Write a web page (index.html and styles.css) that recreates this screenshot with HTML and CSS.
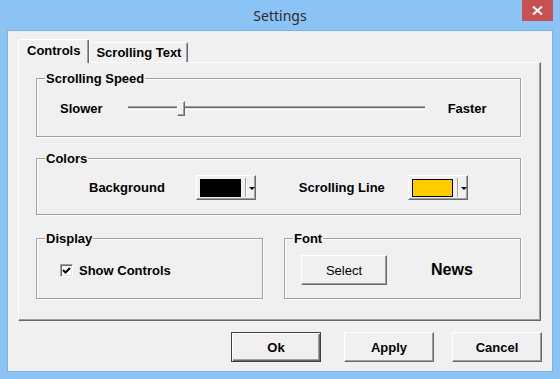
FILE: index.html
```html
<!DOCTYPE html>
<html>
<head>
<meta charset="utf-8">
<title>Settings</title>
<link rel="stylesheet" href="styles.css">
</head>
<body>
<div class="window">
  <header class="titlebar">
    <span class="tb-side"></span>
    <span class="title">Settings</span>
    <span class="tb-side tb-right">
      <span class="close">
        <svg width="11" height="9" viewBox="0 0 11 9"><path d="M1 0.5 L10 8.5 M10 0.5 L1 8.5" stroke="#fff" stroke-width="2"/></svg>
      </span>
    </span>
  </header>
  <main class="client">
    <div class="tabstrip">
      <div class="tab active">Controls</div>
      <div class="tab">Scrolling Text</div>
    </div>
    <div class="panel">
      <section class="group g-speed">
        <div class="legend">Scrolling Speed</div>
        <div class="row speed-row">
          <span class="lbl">Slower</span>
          <div class="slider">
            <div class="track"></div>
            <div class="thumb"></div>
          </div>
          <span class="lbl faster">Faster</span>
        </div>
      </section>
      <section class="group g-colors">
        <div class="legend">Colors</div>
        <div class="row colors-row">
          <span class="lbl bg-lbl">Background</span>
          <div class="colorbtn"><span class="swatch sw-black"></span><span class="sep"></span><span class="arrow"></span></div>
          <span class="lbl line-lbl">Scrolling Line</span>
          <div class="colorbtn"><span class="swatch sw-yellow"></span><span class="sep"></span><span class="arrow"></span></div>
        </div>
      </section>
      <div class="bottom-groups">
        <section class="group g-display">
          <div class="legend">Display</div>
          <div class="row display-row">
            <span class="checkbox">
              <svg width="9" height="9" viewBox="0 0 9 9"><path d="M1 4 L3.5 6.5 L8 2" stroke="#000" stroke-width="2" fill="none"/></svg>
            </span>
            <span class="lbl">Show Controls</span>
          </div>
        </section>
        <section class="group g-font">
          <div class="legend">Font</div>
          <div class="row font-row">
            <div class="btn select-btn">Select</div>
            <span class="news">News</span>
          </div>
        </section>
      </div>
    </div>
    <div class="buttons">
      <div class="btn dlg default">Ok</div>
      <div class="btn dlg apply">Apply</div>
      <div class="btn dlg">Cancel</div>
    </div>
  </main>
</div>
</body>
</html>
```

FILE: styles.css
```css
* { box-sizing: border-box; }
html, body { margin: 0; padding: 0; }
body {
  width: 560px;
  height: 379px;
  overflow: hidden;
  font-family: "Liberation Sans", Arial, sans-serif;
  font-size: 13px;
  color: #000;
}
.window {
  width: 560px;
  height: 379px;
  background: #8cc3f5;
  display: flex;
  flex-direction: column;
}
.titlebar {
  height: 30px;
  display: grid;
  grid-template-columns: 1fr auto 1fr;
  align-items: start;
}
.title {
  font-family: "Noto Sans", "Open Sans", sans-serif;
  font-size: 14px;
  color: #2b2b2b;
  line-height: 31px;
}
.tb-right {
  display: flex;
  justify-content: flex-end;
  padding-right: 7px;
}
.close {
  width: 31px;
  height: 21px;
  background: #c75050;
  display: flex;
  align-items: center;
  justify-content: center;
}
.client {
  margin: 0 7px 7px 7px;
  border: 1px solid #7cb1e6;
  background: #f0f0f0;
  height: 342px;
  padding: 8px 10px 0 10px;
  display: flex;
  flex-direction: column;
}
.tabstrip {
  display: flex;
  align-items: flex-end;
  height: 24px;
  margin-bottom: -1px;
}
.tab {
  height: 20px;
  margin-bottom: 1px;
  padding: 0 6px;
  font-weight: bold;
  line-height: 20px;
  background: #f0f0f0;
  border-top: 1px solid #fff;
  border-left: 1px solid #fff;
  border-right: 1px solid #696969;
  box-shadow: inset -1px 0 0 #a0a0a0;
  border-radius: 2px 2px 0 0;
}
.tab.active {
  height: 24px;
  margin-bottom: 0;
  padding: 0 8px;
  line-height: 22px;
  position: relative;
  z-index: 1;
}
.panel {
  width: 523px;
  height: 259px;
  border: 1px solid;
  border-color: #fff #696969 #696969 #fff;
  box-shadow: inset -1px -1px 0 #a0a0a0;
  padding: 15px 19px 0 17px;
}
.group {
  border: 1px solid #a0a0a0;
  box-shadow: inset 1px 1px 0 #fff, 1px 1px 0 #fff;
}
.legend {
  margin: -8px 0 0 8px;
  padding: 0 1px;
  width: fit-content;
  line-height: 15px;
  height: 15px;
  background: #f0f0f0;
  font-weight: bold;
}
.row {
  display: flex;
  align-items: center;
}
.lbl { font-weight: bold; }
.speed-row {
  height: 30px;
  margin-top: 7px;
  margin-bottom: 13px;
  padding-left: 23px;
}
.slider {
  margin-left: 25px;
  width: 297px;
  height: 15px;
  position: relative;
  display: flex;
  align-items: center;
}
.track {
  width: 100%;
  height: 4px;
  background: linear-gradient(#a0a0a0 0 1px, #696969 1px 2px, #e3e3e3 2px 3px, #fff 3px 4px);
}
.thumb {
  position: absolute;
  left: 49px;
  top: 0;
  width: 8px;
  height: 15px;
  background: #f0f0f0;
  border: 1px solid;
  border-color: #fff #696969 #696969 #fff;
  box-shadow: inset -1px -1px 0 #a0a0a0;
}
.faster { margin-left: 23px; }

.g-colors { margin-top: 21px; }
.colors-row {
  height: 25px;
  margin-top: 9px;
  margin-bottom: 14px;
  padding-left: 52px;
}
.colorbtn {
  width: 60px;
  height: 25px;
  margin-left: 31px;
  background: #f0f0f0;
  border: 1px solid;
  border-color: #fff #696969 #696969 #fff;
  box-shadow: inset -1px -1px 0 #a0a0a0;
  display: flex;
  align-items: center;
  padding-left: 3px;
}
.line-lbl { margin-left: 43px; }
.line-lbl + .colorbtn { margin-left: 23px; }
.swatch {
  width: 41px;
  height: 18px;
  border: 1px solid #000;
}
.sw-black { background: #000; }
.sw-yellow { background: #ffcc00; }
.sep {
  width: 2px;
  height: 19px;
  margin-left: 4px;
  border-left: 1px solid #a0a0a0;
  border-right: 1px solid #fff;
}
.arrow {
  margin-left: 2px;
  margin-top: 2px;
  width: 0;
  height: 0;
  border-left: 3px solid transparent;
  border-right: 3px solid transparent;
  border-top: 3px solid #000;
}

.bottom-groups {
  margin-top: 23px;
  display: grid;
  grid-template-columns: 227px 237px;
  column-gap: 21px;
}
.display-row, .font-row {
  height: 30px;
  margin-top: 9px;
  margin-bottom: 13px;
}
.display-row { padding-left: 23px; }
.checkbox {
  width: 13px;
  height: 13px;
  background: #fff;
  border: 1px solid;
  border-color: #a0a0a0 #fff #fff #a0a0a0;
  box-shadow: inset 1px 1px 0 #696969, inset -1px -1px 0 #e3e3e3;
  display: flex;
  align-items: center;
  justify-content: center;
  margin-right: 6px;
}
.font-row { padding-left: 16px; }
.btn {
  background: #f0f0f0;
  border: 1px solid;
  border-color: #fff #696969 #696969 #fff;
  box-shadow: inset -1px -1px 0 #a0a0a0;
  display: flex;
  align-items: center;
  justify-content: center;
}
.select-btn {
  width: 86px;
  height: 30px;
  font-weight: normal;
}
.news {
  margin-left: 44px;
  font-weight: bold;
  font-size: 16px;
}
.buttons {
  margin-top: 11px;
  display: flex;
  justify-content: flex-end;
}
.dlg {
  width: 90px;
  height: 30px;
  font-weight: bold;
}
.default {
  margin-right: 23px;
  border-color: #404040;
  box-shadow: inset 1px 1px 0 #fff, inset -1px -1px 0 #696969, inset -2px -2px 0 #a0a0a0;
}
.apply { margin-right: 18px; }
```
